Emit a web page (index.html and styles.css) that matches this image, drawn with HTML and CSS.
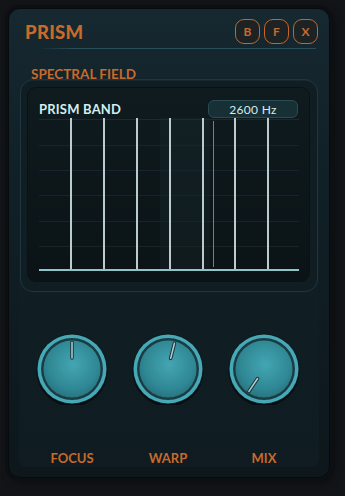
FILE: index.html
```html
<!DOCTYPE html>
<html>
<head>
<meta charset="utf-8">
<link rel="stylesheet" href="styles.css">
</head>
<body>
<div class="panel">
  <div class="header">
    <div class="title">PRISM</div>
    <div class="btns">
      <div class="btn">B</div>
      <div class="btn">F</div>
      <div class="btn">X</div>
    </div>
  </div>
  <div class="divider"></div>
  <div class="body">
    <div class="section-label">SPECTRAL FIELD</div>
    <div class="field">
      <div class="screen">
        <div class="screen-head">
          <div class="band">PRISM BAND</div>
          <div class="pill">2600 Hz</div>
        </div>
        <div class="graph">
          <div class="hl"></div>
          <div class="grid g0"></div>
          <div class="grid g1"></div>
          <div class="grid g2"></div>
          <div class="grid g3"></div>
          <div class="grid g4"></div>
          <div class="grid g5"></div>
          <div class="vl" style="left:31px"></div>
          <div class="vl" style="left:64px"></div>
          <div class="vl" style="left:97px"></div>
          <div class="vl" style="left:130px"></div>
          <div class="vl" style="left:163px"></div>
          <div class="vl thin" style="left:174px"></div>
          <div class="vl" style="left:195px"></div>
          <div class="vl" style="left:228px"></div>
          <div class="base"></div>
        </div>
      </div>
    </div>
    <div class="knobs">
      <div class="knob-col">
        <svg class="knob" viewBox="0 0 72 72" width="72" height="72">
          <defs>
            <radialGradient id="kg" cx="52%" cy="42%" r="62%">
              <stop offset="0" stop-color="#44a5b2"/>
              <stop offset="0.7" stop-color="#2f8894"/>
              <stop offset="1" stop-color="#27707b"/>
            </radialGradient>
          </defs>
          <circle cx="36" cy="38" r="35.5" fill="rgba(0,0,0,0.55)"/>
          <circle cx="36" cy="36" r="35.5" fill="#0c1c21"/>
          <circle cx="36" cy="36" r="34.5" fill="#47a9b6"/>
          <circle cx="36" cy="36" r="31" fill="#1a3d45"/>
          <circle cx="36" cy="36" r="28.5" fill="url(#kg)"/>
          <g transform="rotate(0 36 36)">
            <line x1="36" y1="25" x2="36" y2="9.5" stroke="#163940" stroke-width="3.6" stroke-linecap="round"/>
            <line x1="36" y1="25" x2="36" y2="9.5" stroke="#b9cccc" stroke-width="1.5" stroke-linecap="round"/>
          </g>
        </svg>
        <div class="klabel">FOCUS</div>
      </div>
      <div class="knob-col">
        <svg class="knob" viewBox="0 0 72 72" width="72" height="72">
          <circle cx="36" cy="38" r="35.5" fill="rgba(0,0,0,0.55)"/>
          <circle cx="36" cy="36" r="35.5" fill="#0c1c21"/>
          <circle cx="36" cy="36" r="34.5" fill="#47a9b6"/>
          <circle cx="36" cy="36" r="31" fill="#1a3d45"/>
          <circle cx="36" cy="36" r="28.5" fill="url(#kg)"/>
          <g transform="rotate(14 36 36)">
            <line x1="36" y1="25" x2="36" y2="9.5" stroke="#163940" stroke-width="3.6" stroke-linecap="round"/>
            <line x1="36" y1="25" x2="36" y2="9.5" stroke="#b9cccc" stroke-width="1.5" stroke-linecap="round"/>
          </g>
        </svg>
        <div class="klabel">WARP</div>
      </div>
      <div class="knob-col">
        <svg class="knob" viewBox="0 0 72 72" width="72" height="72">
          <circle cx="36" cy="38" r="35.5" fill="rgba(0,0,0,0.55)"/>
          <circle cx="36" cy="36" r="35.5" fill="#0c1c21"/>
          <circle cx="36" cy="36" r="34.5" fill="#47a9b6"/>
          <circle cx="36" cy="36" r="31" fill="#1a3d45"/>
          <circle cx="36" cy="36" r="28.5" fill="url(#kg)"/>
          <g transform="rotate(-146 36 36)">
            <line x1="36" y1="24.5" x2="36" y2="9" stroke="#163940" stroke-width="3.6" stroke-linecap="round"/>
            <line x1="36" y1="24.5" x2="36" y2="9" stroke="#b9cccc" stroke-width="1.5" stroke-linecap="round"/>
          </g>
        </svg>
        <div class="klabel">MIX</div>
      </div>
    </div>
  </div>
</div>
</body>
</html>
```

FILE: styles.css
```css
html, body {
  margin: 0;
  padding: 0;
}
body {
  background: #121417;
  padding: 8px;
  font-family: Lato, "Open Sans", sans-serif;
  width: 345px;
  height: 496px;
  box-sizing: border-box;
}
.panel {
  width: 322px;
  height: 470px;
  box-sizing: border-box;
  border-radius: 12px;
  border: 1px solid #070b0d;
  box-shadow: 0 0 0 3px #0d1013, 3px 3px 8px rgba(0, 0, 0, 0.6);
  background: linear-gradient(180deg, #162830 0%, #112027 35%, #0d171c 100%);
  display: flex;
  flex-direction: column;
}
.header {
  display: flex;
  align-items: center;
  justify-content: space-between;
  padding: 10px 11px 0 16px;
  height: 25px;
}
.title {
  color: #c86a2b;
  font-weight: 900;
  font-size: 18.5px;
  letter-spacing: 0.3px;
}
.btns {
  display: flex;
  gap: 4px;
}
.btn {
  width: 25px;
  height: 25px;
  box-sizing: border-box;
  border: 1.5px solid #c2662a;
  border-radius: 9px;
  background: #1d2225;
  color: #c86a2b;
  font-size: 12px;
  font-weight: 700;
  display: flex;
  align-items: center;
  justify-content: center;
}
.divider {
  height: 1px;
  margin: 4px 13px 0 32px;
  background: linear-gradient(90deg, rgba(42, 74, 84, 0.1), #2b4d58 12%, #2b4d58 100%);
}
.body {
  flex: 1;
  display: flex;
  flex-direction: column;
  margin: 0 10px 10px 10px;
  border-radius: 0 0 8px 8px;
  background: linear-gradient(180deg, rgba(0,0,0,0) 0%, rgba(20, 36, 43, 0.35) 100%);
}
.section-label {
  color: #c86a2b;
  font-weight: 700;
  font-size: 13.5px;
  line-height: 14px;
  margin: 18px 0 0 12px;
}
.field {
  margin: -2px 0 0 1px;
  width: 298px;
  box-sizing: border-box;
  border: 1px solid #1f3640;
  border-radius: 13px;
  background: #101e24;
  padding: 7px 7px 9px 6px;
  box-shadow: inset 0 1px 0 rgba(60, 100, 110, 0.15);
}
.screen {
  border: 1px solid #0a1114;
  border-radius: 9px;
  background: linear-gradient(180deg, #0f1b1f 0%, #0b1316 100%);
  padding: 12px 10px 9px 11px;
}
.screen-head {
  display: flex;
  justify-content: space-between;
  align-items: center;
  height: 18px;
}
.band {
  color: #d2eeee;
  font-weight: 700;
  font-size: 13px;
  letter-spacing: 0.2px;
}
.pill {
  width: 90px;
  height: 18px;
  box-sizing: border-box;
  border: 1px solid #2a4b52;
  border-radius: 6px;
  background: #173036;
  color: #d6eaea;
  font-size: 12px;
  display: flex;
  align-items: center;
  justify-content: center;
  margin-right: 1px;
  letter-spacing: 0.3px;
}
.graph {
  position: relative;
  height: 154px;
}
.hl {
  position: absolute;
  left: 121px;
  width: 50px;
  top: 0;
  bottom: 2px;
  background: rgba(40, 60, 66, 0.18);
}
.grid {
  position: absolute;
  left: 0;
  right: 0;
  height: 1px;
  background: #17252a;
}
.g0 { top: 1px; background: #1a2a2e; }
.g1 { top: 27px; }
.g2 { top: 52px; }
.g3 { top: 77px; }
.g4 { top: 103px; }
.g5 { top: 128px; }
.vl {
  position: absolute;
  top: 0;
  bottom: 2px;
  width: 2px;
  background: #bccbcc;
}
.vl.thin {
  width: 1px;
  top: 3px;
  bottom: 5px;
  background: #6f8386;
}
.base {
  position: absolute;
  left: 0;
  right: 0;
  bottom: 1px;
  height: 2px;
  background: #8ec6c8;
}
.knobs {
  display: grid;
  grid-template-columns: 96px 96px 96px;
  justify-content: center;
  margin-top: 41px;
  margin-left: -2px;
}
.knob-col {
  display: flex;
  flex-direction: column;
  align-items: center;
}
.knob {
  display: block;
}
.klabel {
  color: #c86a2b;
  font-weight: 700;
  font-size: 13px;
  margin-top: 45px;
}
```
